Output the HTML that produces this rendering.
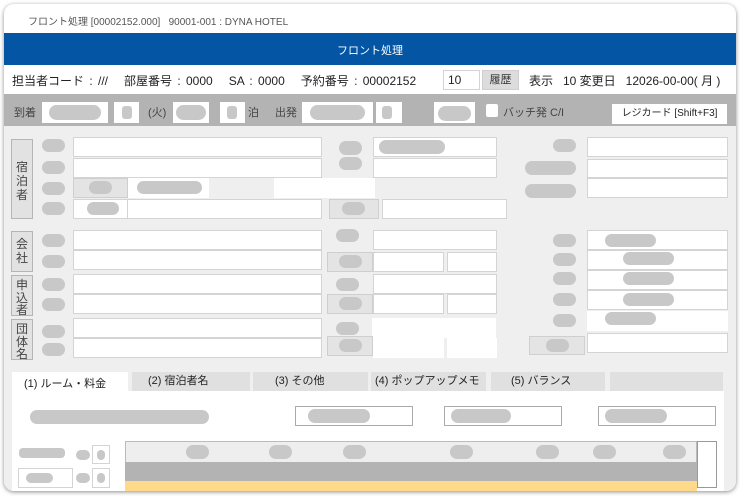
<!DOCTYPE html>
<html><head><meta charset="utf-8"><style>
*{margin:0;padding:0;box-sizing:border-box}
body{width:740px;height:496px;background:#fff;position:relative;overflow:hidden;font-family:"Liberation Sans","Noto Sans CJK JP",sans-serif;color:#333}
.a{position:absolute}
.card{left:4px;top:4px;width:732px;height:487px;border-radius:10px;background:#fff;box-shadow:0 1px 4px rgba(0,0,0,.45);overflow:hidden}
.w{position:absolute;background:#fff;border:1px solid #d4d4d4}
.g{position:absolute;background:#e4e4e4;border:1px solid #cfcfcf}
.p{position:absolute;background:#c8c8c8;border-radius:8px}
.lbl{position:absolute;background:#e2e2e2;border:1px solid #b5b5b5;font-size:12px;color:#444;line-height:12.5px;text-align:center;padding-top:3px}
.t{position:absolute;white-space:nowrap}
.tab{position:absolute;top:372px;height:19px;background:#e0e0e0;font-size:11px;color:#222;line-height:19px;padding-left:12px}
</style></head><body>
<div class="a card"><div class="a" style="left:0;top:122px;width:732px;height:370px;background:#efefef"></div></div>
<div class="t" style="left:28px;top:13px;font-size:10px;color:#555">フロント処理 [00002152.000]&nbsp;&nbsp;&nbsp;90001-001 : DYNA HOTEL</div>
<div class="a" style="left:4px;top:33px;width:732px;height:32px;background:#0456a4"></div>
<div class="t" style="left:0;width:740px;text-align:center;top:42px;font-size:11px;color:#fff">フロント処理</div>
<div class="t" style="left:12px;top:72px;font-size:12px;color:#222;word-spacing:2px">担当者コード : ///&nbsp;&nbsp;&nbsp;部屋番号 : 0000&nbsp;&nbsp;&nbsp;SA : 0000&nbsp;&nbsp;&nbsp;予約番号 : 00002152</div>
<div class="w" style="left:443px;top:70px;width:37px;height:20px;font-size:12px;line-height:18px;padding-left:4px;color:#222">10</div>
<div class="g" style="left:482px;top:70px;width:37px;height:20px;background:#dcdcdc;font-size:11px;line-height:18px;text-align:center;color:#333">履歴</div>
<div class="t" style="left:529px;top:72px;font-size:12px;color:#222">表示&nbsp;&nbsp;&nbsp;10 変更日&nbsp;&nbsp;&nbsp;12026-00-00( 月 )</div>
<div class="a" style="left:4px;top:94px;width:732px;height:32px;background:#b3b3b3"></div>
<div class="t" style="left:14px;top:104px;font-size:11px;color:#444">到着</div>
<div class="w" style="left:42px;top:102px;width:66px;height:21px;border:0"></div><div class="p" style="left:49px;top:105px;width:52px;height:15px"></div>
<div class="w" style="left:114px;top:102px;width:25px;height:21px;border:0"></div><div class="p" style="left:122px;top:106px;width:10px;height:13px;border-radius:3px"></div>
<div class="t" style="left:148px;top:104px;font-size:11px;color:#444">(火)</div>
<div class="w" style="left:173px;top:102px;width:36px;height:21px;border:0"></div><div class="p" style="left:176px;top:105px;width:30px;height:15px"></div>
<div class="w" style="left:220px;top:102px;width:25px;height:21px;border:0"></div><div class="p" style="left:227px;top:106px;width:10px;height:13px;border-radius:3px"></div>
<div class="t" style="left:248px;top:104px;font-size:11px;color:#444">泊</div>
<div class="t" style="left:275px;top:104px;font-size:11px;color:#444">出発</div>
<div class="w" style="left:302px;top:102px;width:71px;height:21px;border:0"></div><div class="p" style="left:310px;top:105px;width:55px;height:15px"></div>
<div class="w" style="left:376px;top:102px;width:26px;height:21px;border:0"></div><div class="p" style="left:382px;top:106px;width:10px;height:13px;border-radius:3px"></div>
<div class="w" style="left:434px;top:102px;width:41px;height:21px;border:0"></div><div class="p" style="left:438px;top:106px;width:33px;height:15px"></div>
<div class="w" style="left:486px;top:104px;width:12px;height:13px;border:0;border-radius:2px"></div>
<div class="t" style="left:503px;top:104px;font-size:11px;color:#444">バッチ発 C/I</div>
<div class="w" style="left:612px;top:104px;width:115px;height:20px;border:0;font-size:10px;line-height:20px;text-align:center;color:#222">レジカード [Shift+F3]</div>

<div class="lbl" style="left:11px;top:139px;width:22px;height:80px;padding-top:20px;line-height:14px">宿<br>泊<br>者</div>
<div class="p" style="left:42px;top:139px;width:23px;height:13px"></div>
<div class="p" style="left:42px;top:161px;width:23px;height:13px"></div>
<div class="p" style="left:42px;top:182px;width:23px;height:13px"></div>
<div class="p" style="left:42px;top:202px;width:23px;height:13px"></div>
<div class="w" style="left:73px;top:137px;width:249px;height:20px"></div>
<div class="w" style="left:73px;top:158px;width:249px;height:20px"></div>
<div class="g" style="left:73px;top:178px;width:55px;height:20px"></div><div class="p" style="left:89px;top:181px;width:23px;height:13px"></div>
<div class="w" style="left:128px;top:178px;width:81px;height:20px;border:0"></div><div class="p" style="left:137px;top:181px;width:65px;height:13px"></div>
<div class="w" style="left:274px;top:178px;width:101px;height:20px;border:0"></div>
<div class="w" style="left:73px;top:199px;width:55px;height:20px"></div><div class="p" style="left:87px;top:202px;width:32px;height:13px"></div>
<div class="w" style="left:127px;top:199px;width:195px;height:20px"></div>
<div class="p" style="left:339px;top:141px;width:23px;height:14px"></div>
<div class="p" style="left:339px;top:157px;width:23px;height:13px"></div>
<div class="w" style="left:373px;top:137px;width:124px;height:20px"></div><div class="p" style="left:379px;top:140px;width:66px;height:14px"></div>
<div class="w" style="left:373px;top:158px;width:124px;height:20px"></div>
<div class="g" style="left:329px;top:199px;width:50px;height:20px"></div><div class="p" style="left:342px;top:202px;width:23px;height:13px"></div>
<div class="w" style="left:382px;top:199px;width:125px;height:20px"></div>
<div class="p" style="left:553px;top:139px;width:23px;height:13px"></div>
<div class="p" style="left:525px;top:161px;width:51px;height:14px"></div>
<div class="p" style="left:525px;top:184px;width:51px;height:14px"></div>
<div class="w" style="left:587px;top:137px;width:141px;height:20px"></div>
<div class="w" style="left:587px;top:159px;width:141px;height:19px"></div>
<div class="w" style="left:587px;top:178px;width:141px;height:20px"></div>

<div class="lbl" style="left:11px;top:231px;width:22px;height:41px;padding-top:5px;line-height:14px">会<br>社</div>
<div class="lbl" style="left:11px;top:275px;width:22px;height:41px">申<br>込<br>者</div>
<div class="lbl" style="left:11px;top:319px;width:22px;height:41px">団<br>体<br>名</div>
<div class="p" style="left:42px;top:234px;width:23px;height:13px"></div>
<div class="p" style="left:42px;top:255px;width:23px;height:13px"></div>
<div class="p" style="left:42px;top:278px;width:23px;height:13px"></div>
<div class="p" style="left:42px;top:298px;width:23px;height:13px"></div>
<div class="p" style="left:42px;top:325px;width:23px;height:13px"></div>
<div class="p" style="left:42px;top:343px;width:23px;height:13px"></div>
<div class="w" style="left:73px;top:230px;width:249px;height:20px"></div>
<div class="w" style="left:73px;top:250px;width:249px;height:20px"></div>
<div class="w" style="left:73px;top:274px;width:249px;height:20px"></div>
<div class="w" style="left:73px;top:294px;width:249px;height:20px"></div>
<div class="w" style="left:73px;top:318px;width:249px;height:20px"></div>
<div class="w" style="left:73px;top:338px;width:249px;height:20px"></div>

<div class="p" style="left:336px;top:229px;width:23px;height:13px"></div>
<div class="w" style="left:373px;top:230px;width:124px;height:20px"></div>
<div class="g" style="left:327px;top:252px;width:46px;height:20px"></div><div class="p" style="left:339px;top:255px;width:23px;height:13px"></div>
<div class="w" style="left:373px;top:252px;width:71px;height:20px"></div><div class="w" style="left:447px;top:252px;width:50px;height:20px"></div>
<div class="p" style="left:336px;top:278px;width:23px;height:13px"></div>
<div class="w" style="left:373px;top:274px;width:124px;height:20px"></div>
<div class="g" style="left:327px;top:294px;width:46px;height:20px"></div><div class="p" style="left:339px;top:297px;width:23px;height:13px"></div>
<div class="w" style="left:373px;top:294px;width:71px;height:20px"></div><div class="w" style="left:447px;top:294px;width:50px;height:20px"></div>
<div class="p" style="left:336px;top:322px;width:23px;height:13px"></div>
<div class="w" style="left:372px;top:318px;width:124px;height:20px;border:0"></div>
<div class="g" style="left:327px;top:336px;width:46px;height:20px"></div><div class="p" style="left:339px;top:339px;width:23px;height:13px"></div>
<div class="w" style="left:373px;top:338px;width:71px;height:20px;border:0"></div><div class="w" style="left:447px;top:338px;width:50px;height:20px;border:0"></div>

<div class="p" style="left:553px;top:234px;width:23px;height:13px"></div>
<div class="p" style="left:553px;top:253px;width:23px;height:13px"></div>
<div class="p" style="left:553px;top:272px;width:23px;height:13px"></div>
<div class="p" style="left:553px;top:293px;width:23px;height:13px"></div>
<div class="p" style="left:553px;top:314px;width:23px;height:13px"></div>
<div class="w" style="left:587px;top:230px;width:141px;height:20px"></div><div class="p" style="left:605px;top:234px;width:51px;height:13px"></div>
<div class="w" style="left:587px;top:250px;width:141px;height:20px"></div><div class="p" style="left:623px;top:252px;width:51px;height:13px"></div>
<div class="w" style="left:587px;top:270px;width:141px;height:20px"></div><div class="p" style="left:623px;top:272px;width:51px;height:13px"></div>
<div class="w" style="left:587px;top:290px;width:141px;height:20px"></div><div class="p" style="left:623px;top:293px;width:51px;height:13px"></div>
<div class="w" style="left:587px;top:311px;width:141px;height:20px;border:0"></div><div class="p" style="left:605px;top:312px;width:51px;height:13px"></div>
<div class="w" style="left:587px;top:333px;width:141px;height:20px"></div>
<div class="g" style="left:529px;top:336px;width:56px;height:19px"></div><div class="p" style="left:546px;top:339px;width:23px;height:13px"></div>

<div class="a" style="left:12px;top:391px;width:712px;height:100px;background:#fff"></div>
<div class="tab" style="left:12px;width:116px;height:26px;background:#fff;line-height:24px">(1) ルーム・料金</div>
<div class="tab" style="left:132px;width:118px;padding-left:16px">(2) 宿泊者名</div>
<div class="tab" style="left:253px;width:115px;padding-left:22px">(3) その他</div>
<div class="tab" style="left:371px;width:115px;padding-left:4px">(4) ポップアップメモ</div>
<div class="tab" style="left:491px;width:114px;padding-left:20px">(5) バランス</div>
<div class="tab" style="left:610px;width:113px"></div>
<div class="p" style="left:30px;top:410px;width:179px;height:14px"></div>
<div class="w" style="left:295px;top:406px;width:118px;height:20px;border-color:#aaa"></div><div class="p" style="left:308px;top:409px;width:62px;height:14px"></div>
<div class="w" style="left:444px;top:406px;width:118px;height:20px;border-color:#aaa"></div><div class="p" style="left:451px;top:409px;width:60px;height:14px"></div>
<div class="w" style="left:598px;top:406px;width:118px;height:20px;border-color:#aaa"></div><div class="p" style="left:605px;top:409px;width:62px;height:14px"></div>
<div class="a" style="left:125px;top:441px;width:572px;height:21px;background:#eeeeee;border:1px solid #bbb;border-bottom:0"></div>
<div class="a" style="left:125px;top:462px;width:572px;height:19px;background:#b3b3b3"></div>
<div class="a" style="left:125px;top:481px;width:572px;height:10px;background:#ffd98a"></div>
<div class="w" style="left:697px;top:441px;width:20px;height:47px;border-color:#999"></div>
<div class="p" style="left:186px;top:445px;width:23px;height:14px"></div>
<div class="p" style="left:269px;top:445px;width:23px;height:14px"></div>
<div class="p" style="left:343px;top:445px;width:23px;height:14px"></div>
<div class="p" style="left:450px;top:445px;width:23px;height:14px"></div>
<div class="p" style="left:536px;top:445px;width:23px;height:14px"></div>
<div class="p" style="left:593px;top:445px;width:23px;height:14px"></div>
<div class="p" style="left:663px;top:445px;width:23px;height:14px"></div>
<div class="p" style="left:19px;top:448px;width:46px;height:10px;border-radius:4px"></div>
<div class="p" style="left:76px;top:450px;width:14px;height:10px"></div>
<div class="w" style="left:92px;top:445px;width:18px;height:19px"></div><div class="p" style="left:97px;top:450px;width:8px;height:10px"></div>
<div class="w" style="left:18px;top:468px;width:55px;height:20px"></div><div class="p" style="left:26px;top:473px;width:27px;height:10px"></div>
<div class="p" style="left:76px;top:473px;width:14px;height:10px"></div>
<div class="w" style="left:92px;top:468px;width:18px;height:20px"></div><div class="p" style="left:97px;top:473px;width:8px;height:10px"></div>
</body></html>
